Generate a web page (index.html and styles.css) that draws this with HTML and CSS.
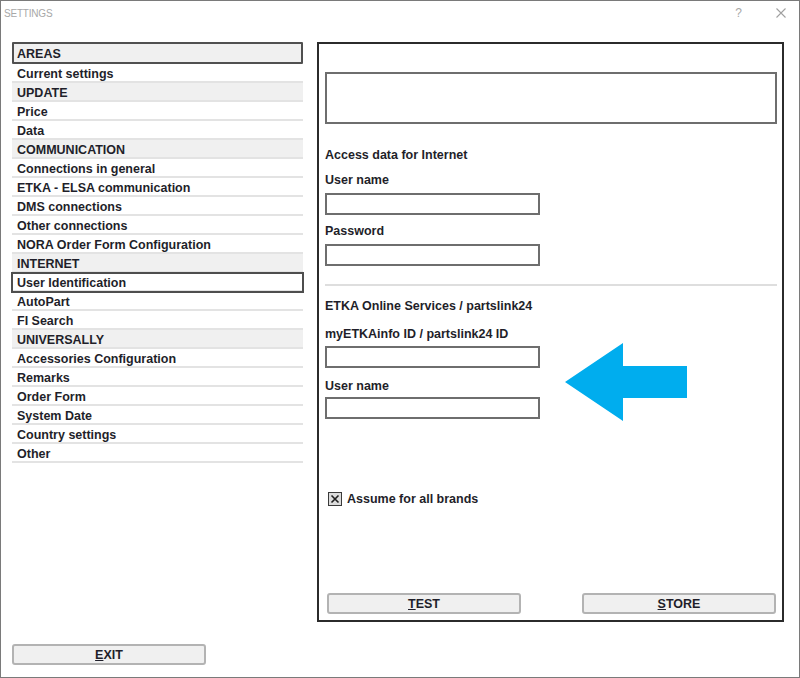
FILE: index.html
```html
<!DOCTYPE html>
<html>
<head>
<meta charset="utf-8">
<link rel="stylesheet" href="styles.css">
</head>
<body>
<div class="window">
  <div class="titlebar">
    <span class="title">SETTINGS</span>
    <span class="tb-help">?</span>
    <svg class="tb-close" width="10" height="10" viewBox="0 0 10 10"><path d="M0.5 0.5 L9.5 9.5 M9.5 0.5 L0.5 9.5" stroke="#a0a0a0" stroke-width="1.1" fill="none"/></svg>
  </div>
  <div class="main">
    <div class="list">
      <div class="row head first">AREAS</div>
      <div class="row">Current settings</div>
      <div class="row head">UPDATE</div>
      <div class="row">Price</div>
      <div class="row">Data</div>
      <div class="row head">COMMUNICATION</div>
      <div class="row">Connections in general</div>
      <div class="row">ETKA - ELSA communication</div>
      <div class="row">DMS connections</div>
      <div class="row">Other connections</div>
      <div class="row">NORA Order Form Configuration</div>
      <div class="row head">INTERNET</div>
      <div class="row focus">User Identification</div>
      <div class="row">AutoPart</div>
      <div class="row">FI Search</div>
      <div class="row head">UNIVERSALLY</div>
      <div class="row">Accessories Configuration</div>
      <div class="row">Remarks</div>
      <div class="row">Order Form</div>
      <div class="row">System Date</div>
      <div class="row">Country settings</div>
      <div class="row">Other</div>
    </div>
    <div class="panel">
      <div class="topbox"></div>
      <div class="label l-access">Access data for Internet</div>
      <div class="label l-user1">User name</div>
      <div class="input"></div>
      <div class="label l-pass">Password</div>
      <div class="input"></div>
      <div class="sep"></div>
      <div class="label l-etka">ETKA Online Services / partslink24</div>
      <div class="label l-myid">myETKAinfo ID / partslink24 ID</div>
      <div class="input i-myid"></div>
      <div class="label l-user2">User name</div>
      <div class="input i-user2"></div>
      <div class="check-row">
        <svg class="checkbox" width="14" height="14" viewBox="0 0 14 14">
          <rect x="0.5" y="0.5" width="13" height="13" fill="#dcdcdc" stroke="#3a3a3a" stroke-width="1"/>
          <path d="M3.5 3.5 L10.5 10.5 M10.5 3.5 L3.5 10.5" stroke="#1e1e1e" stroke-width="1.6" fill="none"/>
        </svg>
        <span class="check-label">Assume for all brands</span>
      </div>
      <div class="buttons">
        <div class="btn"><u>T</u>EST</div>
        <div class="btn"><u>S</u>TORE</div>
      </div>
    </div>
  </div>
  <div class="footer">
    <div class="btn exit"><u>E</u>XIT</div>
  </div>
  <svg class="arrow" width="122" height="78" viewBox="0 0 122 78">
    <polygon points="0,39 58,0 58,23 122,23 122,55 58,55 58,78" fill="#00adee"/>
  </svg>
</div>
</body>
</html>
```
FILE: styles.css
```css
html, body {
  margin: 0;
  padding: 0;
  background: #ffffff;
}
.window {
  position: relative;
  width: 800px;
  height: 678px;
  box-sizing: border-box;
  border: 1px solid #7a7a7a;
  background: #ffffff;
  font-family: "Liberation Sans", Arial, sans-serif;
  color: #1f1f2a;
  overflow: hidden;
}
.titlebar {
  height: 24px;
  display: flex;
  align-items: center;
  padding-left: 3px;
  padding-right: 13px;
}
.title {
  font-size: 10px;
  color: #a8a8a8;
  letter-spacing: -0.2px;
  flex: 1;
}
.tb-help {
  font-size: 12px;
  color: #a8a8a8;
  margin-right: 34px;
}
.tb-close {
  display: block;
}
.main {
  display: flex;
  margin-top: 17px;
  padding-left: 11px;
}
.list {
  width: 291px;
  display: flex;
  flex-direction: column;
}
.row {
  height: 19px;
  box-sizing: border-box;
  padding: 3px 0 0 5px;
  line-height: 14px;
  font-size: 12.5px;
  font-weight: bold;
  border-bottom: 2px solid #e3e3e3;
  white-space: nowrap;
}
.row.head {
  background: #f0f0f0;
}
.row.first {
  height: 22px;
  border: 2px solid #505050;
  border-radius: 1px;
  padding: 2px 0 0 3px;
  line-height: 16px;
}
.row.focus {
  outline: 2px solid #4e4e4e;
  outline-offset: -1px;
}
.panel {
  margin-left: 14px;
  width: 467px;
  height: 580px;
  box-sizing: border-box;
  border: 2px solid #2b2b2b;
  padding: 28px 5px 6px 6px;
  display: flex;
  flex-direction: column;
}
.topbox {
  height: 52px;
  box-sizing: border-box;
  border: 2px solid #6e6e6e;
}
.label {
  font-size: 12.5px;
  font-weight: bold;
  line-height: 16px;
  padding-top: 2px;
  white-space: nowrap;
}
.l-access { margin-top: 21px; }
.l-user1 { margin-top: 7px; }
.l-pass { margin-top: 6px; }
.l-etka { margin-top: 10px; }
.l-myid { margin-top: 10px; }
.l-user2 { margin-top: 8px; }
.input {
  width: 215px;
  height: 22px;
  box-sizing: border-box;
  border: 2px solid #6e6e6e;
  margin-top: 5px;
}
.input.i-myid { margin-top: 4px; }
.input.i-user2 { margin-top: 3px; }
.sep {
  height: 2px;
  background: #dedede;
  margin-top: 18px;
}
.check-row {
  display: flex;
  align-items: center;
  margin-top: 71px;
  padding-left: 3px;
  gap: 5px;
}
.check-label {
  font-size: 12.5px;
  font-weight: bold;
  line-height: 16px;
  padding-top: 1px;
  white-space: nowrap;
}
.checkbox {
  display: block;
}
.buttons {
  margin-top: auto;
  display: flex;
  justify-content: space-between;
  padding: 0 1px 0 2px;
}
.btn {
  width: 194px;
  height: 21px;
  box-sizing: border-box;
  border: 2px solid #b3b3b3;
  border-radius: 3px;
  background: #f0f0f0;
  font-size: 12.5px;
  font-weight: bold;
  line-height: 16px;
  padding-top: 1px;
  text-align: center;
  color: #1f1f2a;
}
.btn u {
  text-decoration-thickness: 1px;
  text-underline-offset: 1px;
}
.footer {
  margin-top: 22px;
  padding-left: 11px;
  display: flex;
}
.arrow {
  position: absolute;
  left: 564px;
  top: 342px;
  display: block;
}
```
